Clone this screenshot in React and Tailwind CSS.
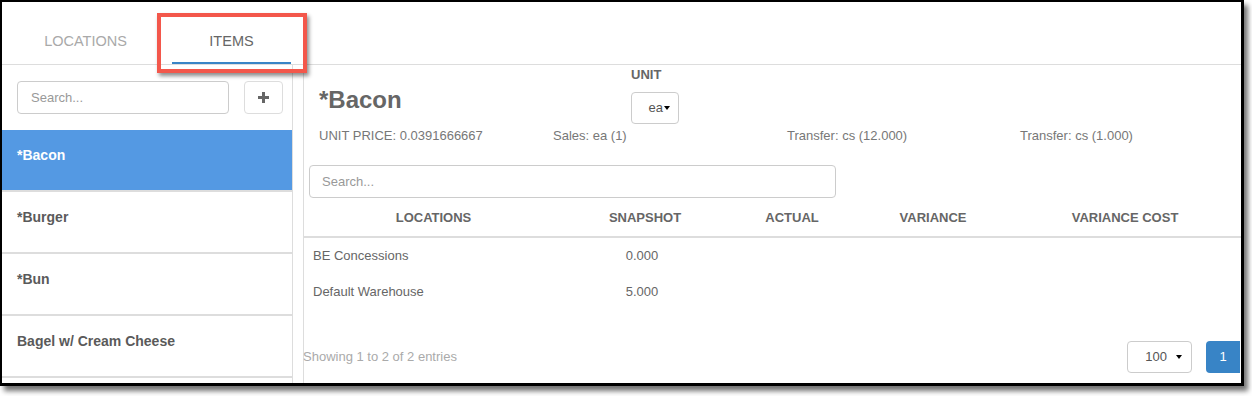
import React from 'react';

const ITEMS = ['*Bacon', '*Burger', '*Bun', 'Bagel w/ Cream Cheese', ''];

const COLS = [
  { label: 'LOCATIONS', w: 'w-[259px]' },
  { label: 'SNAPSHOT', w: 'w-[164px]' },
  { label: 'ACTUAL', w: 'w-[130px]' },
  { label: 'VARIANCE', w: 'w-[152px]' },
  { label: 'VARIANCE COST', w: 'flex-1' },
];

const ROWS = [
  ['BE Concessions', '0.000'],
  ['Default Warehouse', '5.000'],
];

function Caret() {
  return <span className="inline-block w-0 h-0 border-l-[3.5px] border-r-[3.5px] border-t-[4px] border-l-transparent border-r-transparent border-t-black" />;
}

export default function App() {
  return (
    <div className="relative w-[1252px] h-[396px] bg-white overflow-hidden" style={{ fontFamily: '"Liberation Sans", Arial, sans-serif' }}>
      {/* framed window */}
      <div className="w-[1244px] h-[386px] border-2 border-r-[3px] border-b-[3px] border-black shadow-[4px_5px_5px_rgba(0,0,0,0.55)] bg-white flex flex-col overflow-hidden">
        {/* Tabs */}
        <div className="h-[63px] shrink-0 border-b border-[#ddd] flex items-end pl-[24px]">
          <div className="w-[119px] h-full flex items-center justify-center pt-[17px] text-[14.5px] text-[#a9a9a9]">LOCATIONS</div>
          <div className="ml-[27px] w-[119px] h-full flex flex-col">
            <div className="flex-1 flex items-center justify-center pt-[19px] text-[14.5px] text-[#666]">ITEMS</div>
            <div className="h-[2px] bg-[#3a85c6]" />
          </div>
        </div>

        {/* Body */}
        <div className="flex flex-1 min-h-0">
          {/* Left list */}
          <div className="w-[291px] shrink-0 border-r border-[#ddd] flex flex-col overflow-hidden">
            <div className="flex pt-[16px] pl-[15px] pb-[16px] gap-[15px]">
              <div className="w-[212px] h-[33px] border border-[#ccc] rounded-[4px] flex items-center pl-[13px] text-[13px] text-[#999]">Search...</div>
              <div className="w-[39px] h-[33px] border border-[#ddd] rounded-[4px] flex items-center justify-center">
                <svg width="13" height="13" viewBox="0 0 13 13">
                  <path d="M6.5 1v11M1 6.5h11" stroke="#666" strokeWidth="3" />
                </svg>
              </div>
            </div>
            {ITEMS.map((name, i) => (
              <div
                key={i}
                className={`h-[62px] shrink-0 border-b-2 border-[#ddd] pl-[15px] pt-[15px] text-[14px] leading-[20px] font-bold ${i === 0 ? 'bg-[#5499e3] text-white' : 'text-[#5a5a5a]'}`}
              >
                {name}
              </div>
            ))}
          </div>

          {/* Right detail */}
          <div className="ml-[10px] flex-1 border-l border-[#ddd] flex flex-col">
            <div className="flex pl-[15px]">
              <div className="w-[312px] pt-[21px] text-[24px] leading-[28px] font-bold text-[#666]">*Bacon</div>
              <div className="pt-[2px]">
                <div className="text-[13px] leading-[16px] font-bold text-[#666]">UNIT</div>
                <div className="mt-[9px] w-[48px] h-[32px] border border-[#ccc] rounded-[4px] flex items-center justify-end pr-[8px] gap-[1px] text-[13px] text-[#555]">
                  ea<Caret />
                </div>
              </div>
            </div>

            <div className="flex pl-[15px] mt-[4px] text-[13px] leading-[16px] text-[#777]">
              <div className="w-[234px]">UNIT PRICE: 0.0391666667</div>
              <div className="w-[234px]">Sales: ea (1)</div>
              <div className="w-[233px]">Transfer: cs (12.000)</div>
              <div>Transfer: cs (1.000)</div>
            </div>

            <div className="ml-[5px] mt-[21px] w-[527px] h-[33px] border border-[#ccc] rounded-[4px] flex items-center pl-[12px] text-[13px] text-[#999]">Search...</div>

            {/* Table */}
            <div className="mt-[2px] flex h-[38px] border-b-2 border-[#ddd] items-center text-[13px] font-bold text-[#666]">
              {COLS.map(c => (
                <div key={c.label} className={`${c.w} text-center`}>{c.label}</div>
              ))}
            </div>
            {ROWS.map(([loc, snap]) => (
              <div key={loc} className="flex h-[36px] items-center text-[13px] text-[#666]">
                <div className="w-[259px] pl-[9px]">{loc}</div>
                <div className="w-[164px] text-center pr-[6px]">{snap}</div>
              </div>
            ))}

            <div className="mt-[31px] flex items-center justify-between pr-[1px]">
              <div className="text-[13px] text-[#aaa] -ml-[1px]">Showing 1 to 2 of 2 entries</div>
              <div className="flex items-center gap-[14px]">
                <div className="w-[65px] h-[32px] border border-[#ccc] rounded-[4px] flex items-center justify-end pr-[9px] gap-[9px] text-[13px] text-[#555]">
                  100<Caret />
                </div>
                <div className="w-[34px] h-[32px] bg-[#3884c6] rounded-l-[4px] flex items-center justify-center text-[13px] text-white">1</div>
              </div>
            </div>
          </div>
        </div>
      </div>

      {/* annotation highlight */}
      <div className="absolute left-[157px] top-[13px] w-[150px] h-[60px] border-4 border-[#f3574b] shadow-[2px_3px_4px_rgba(0,0,0,0.45)]" />
    </div>
  );
}
